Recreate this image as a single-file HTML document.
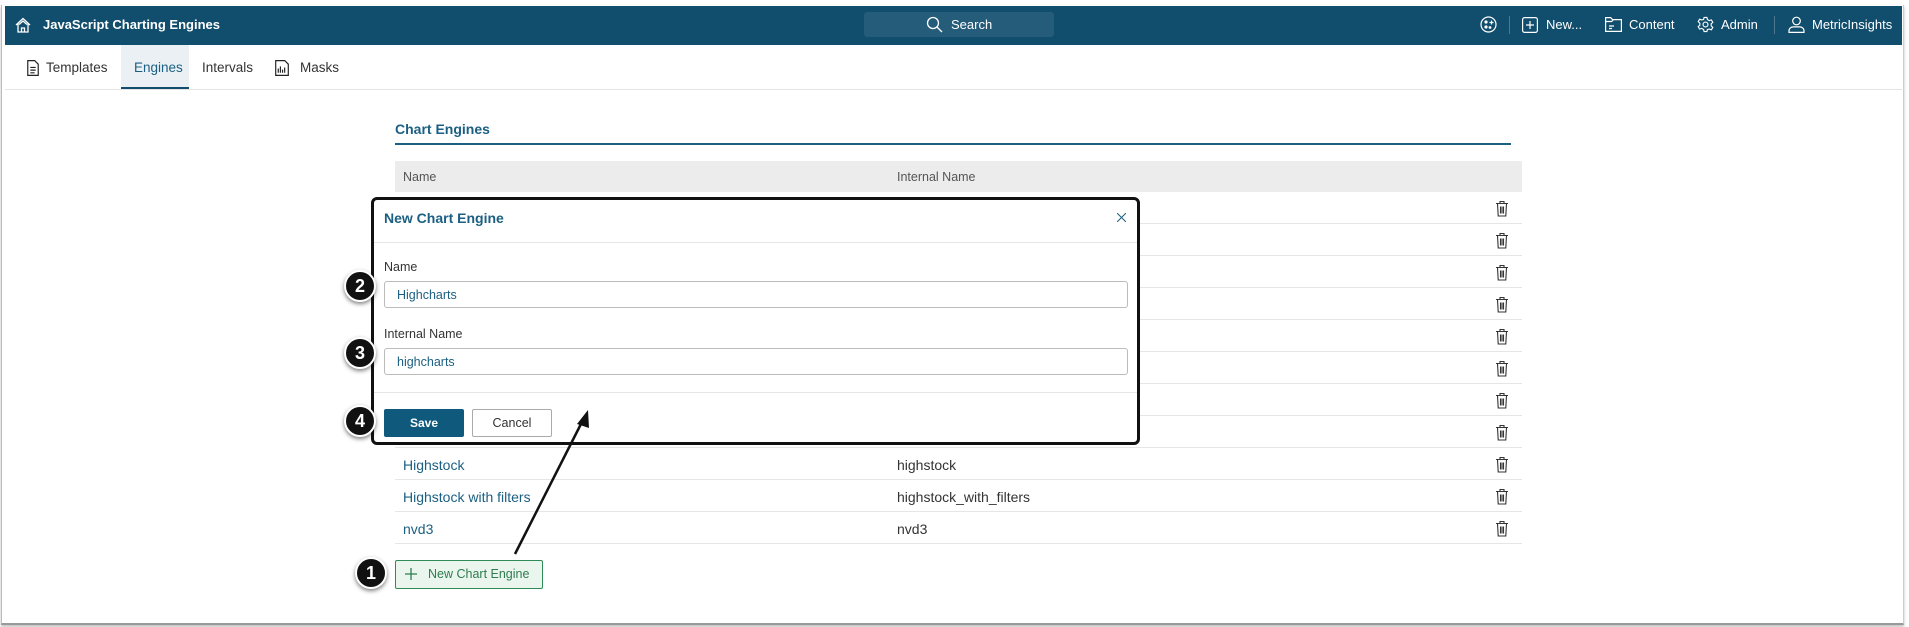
<!DOCTYPE html>
<html><head><meta charset="utf-8"><style>
*{box-sizing:border-box;margin:0;padding:0}
body{width:1909px;height:627px;background:#fff;font-family:"Liberation Sans",sans-serif;position:relative;overflow:hidden;color:#333}
.a{position:absolute}
.frame{left:1px;top:5px;width:1903px;height:620px;border-left:1px solid #bbb;border-right:1px solid #ccc;border-bottom:2px solid #999;box-shadow:0 2px 3px rgba(0,0,0,.25)}
.hdr{left:5px;top:6px;width:1897px;height:39px;background:#114d6c}
.w{color:#fff;font-size:13px}
.tab{font-size:13.5px;color:#333;top:60px}
.row{left:395px;width:1127px;height:32px;border-bottom:1px solid #e6e6e6}
.row span{position:absolute;top:9px;font-size:14px}
.trash{left:1495px}
.badge{width:32px;height:32px;border-radius:50%;background:#111;border:2px solid #fff;box-shadow:0 2px 4px rgba(0,0,0,.5);color:#fff;font-weight:bold;font-size:18px;text-align:center;line-height:28px}
</style></head><body>
<div class="a frame"></div>
<div class="a hdr"></div>
<svg class="a" style="left:15px;top:17px" width="16" height="16" viewBox="0 0 16 16" fill="none" stroke="#fff" stroke-width="1.3"><path d="M1 8L8 1.5 15 8M3 6.5V15h10V6.5M6.5 15v-4h3v4M4 7.5L8 4l4 3.5"/></svg>
<div class="a w" style="left:43px;top:17px;font-weight:bold;font-size:13px">JavaScript Charting Engines</div>
<div class="a" style="left:864px;top:12px;width:190px;height:25px;background:#245c79;border-radius:3px"></div>
<svg class="a" style="left:926px;top:16px" width="17" height="17" viewBox="0 0 17 17" fill="none" stroke="#fff" stroke-width="1.3"><circle cx="7" cy="7" r="5.5"/><path d="M11 11l5 5"/></svg>
<div class="a w" style="left:951px;top:17px">Search</div>
<svg class="a" style="left:1480px;top:16px" width="17" height="17" viewBox="0 0 17 17" fill="none" stroke="#fff" stroke-width="1.2"><circle cx="8.5" cy="8.5" r="7.5"/><path d="M9.5 6.5h4M11.5 4.5v4" /><circle cx="6" cy="6" r="1" fill="#fff"/><circle cx="6" cy="11" r="1" fill="#fff"/><circle cx="10" cy="11.5" r=".8" fill="#fff"/></svg>
<div class="a" style="left:1509px;top:16px;width:1px;height:18px;background:#4f7890"></div>
<svg class="a" style="left:1522px;top:17px" width="16" height="16" viewBox="0 0 16 16" fill="none" stroke="#fff" stroke-width="1.2"><rect x=".6" y=".6" width="14.8" height="14.8" rx="2"/><path d="M8 4v8M4 8h8"/></svg>
<div class="a w" style="left:1546px;top:17px">New...</div>
<svg class="a" style="left:1605px;top:17px" width="17" height="15" viewBox="0 0 17 15" fill="none" stroke="#fff" stroke-width="1.2"><path d="M.6 14.4V.6h5l2 2h8.8v11.8zM.6 4.5h6l2-2M4 9h5M4 11.5h3"/></svg>
<div class="a w" style="left:1629px;top:17px">Content</div>
<svg class="a" style="left:1697px;top:16px" width="17" height="17" viewBox="0 0 24 24" fill="none" stroke="#fff" stroke-width="1.6"><circle cx="12" cy="12" r="3.5"/><path d="M10 2h4l.7 3 2.6 1.5 3-1 2 3.5-2.3 2v3l2.3 2-2 3.5-3-1L14.7 19 14 22h-4l-.7-3-2.6-1.5-3 1-2-3.5 2.3-2v-3L1.7 8l2-3.5 3 1L9.3 5z"/></svg>
<div class="a w" style="left:1721px;top:17px">Admin</div>
<div class="a" style="left:1774px;top:16px;width:1px;height:18px;background:#4f7890"></div>
<svg class="a" style="left:1788px;top:16px" width="17" height="17" viewBox="0 0 17 17" fill="none" stroke="#fff" stroke-width="1.2"><circle cx="8.5" cy="5" r="3.8"/><path d="M1 16.4v-1.5c0-2.5 2-4 4.5-4h6c2.5 0 4.5 1.5 4.5 4v1.5z"/></svg>
<div class="a w" style="left:1812px;top:17px">MetricInsights</div>

<div class="a" style="left:5px;top:89px;width:1897px;height:1px;background:#e4e4e4"></div>
<div class="a" style="left:121px;top:45px;width:68px;height:44px;background:#eaf0f4;border-bottom:2px solid #114d6c"></div>
<svg class="a" style="left:27px;top:60px" width="12" height="16" viewBox="0 0 11 15" fill="none" stroke="#222" stroke-width="1.1"><path d="M.6.6h6.5l3.3 3.3v10.5H.6zM3 7h5M3 9.5h5M3 12h4"/></svg>
<div class="a tab" style="left:46px">Templates</div>
<div class="a tab" style="left:134px;color:#1b5f82">Engines</div>
<div class="a tab" style="left:202px">Intervals</div>
<svg class="a" style="left:275px;top:60px" width="14" height="16" viewBox="0 0 13 15" fill="none" stroke="#222" stroke-width="1.1"><path d="M.6.6h8.5l3.3 3.3v10.5H.6zM3 12V8M5 12V6M7 12V9M9 12V7"/></svg>
<div class="a tab" style="left:300px">Masks</div>

<div class="a" style="left:395px;top:121px;font-size:14px;font-weight:bold;color:#1b5f82">Chart Engines</div>
<div class="a" style="left:395px;top:143px;width:1116px;height:2px;background:#1b5f82"></div>
<div class="a" style="left:395px;top:161px;width:1127px;height:31px;background:#ececec"></div>
<div class="a" style="left:403px;top:170px;font-size:12.5px;color:#555">Name</div>
<div class="a" style="left:897px;top:170px;font-size:12.5px;color:#555">Internal Name</div>

<div class="a row" style="top:192px"></div><div class="a row" style="top:224px"></div><div class="a row" style="top:256px"></div><div class="a row" style="top:288px"></div><div class="a row" style="top:320px"></div><div class="a row" style="top:352px"></div><div class="a row" style="top:384px"></div><div class="a row" style="top:416px"></div>
<div class="a row" style="top:448px"><span style="left:8px;color:#1b5f82">Highstock</span><span style="left:502px">highstock</span></div>
<div class="a row" style="top:480px"><span style="left:8px;color:#1b5f82">Highstock with filters</span><span style="left:502px">highstock_with_filters</span></div>
<div class="a row" style="top:512px"><span style="left:8px;color:#1b5f82">nvd3</span><span style="left:502px">nvd3</span></div>

<svg width="0" height="0" style="position:absolute"><defs><symbol id="t" viewBox="0 0 14 17"><g fill="none" stroke="#333" stroke-width="1.1"><path d="M1 3.5h12M5 3.5V1.5h4v2M2.5 3.5l.7 12.5h7.6l.7-12.5M5.5 6.5v7M7 6.5v7M8.5 6.5v7"/></g></symbol></defs></svg>
<svg class="a trash" style="top:200px" width="14" height="17"><use href="#t"/></svg>
<svg class="a trash" style="top:232px" width="14" height="17"><use href="#t"/></svg>
<svg class="a trash" style="top:264px" width="14" height="17"><use href="#t"/></svg>
<svg class="a trash" style="top:296px" width="14" height="17"><use href="#t"/></svg>
<svg class="a trash" style="top:328px" width="14" height="17"><use href="#t"/></svg>
<svg class="a trash" style="top:360px" width="14" height="17"><use href="#t"/></svg>
<svg class="a trash" style="top:392px" width="14" height="17"><use href="#t"/></svg>
<svg class="a trash" style="top:424px" width="14" height="17"><use href="#t"/></svg>
<svg class="a trash" style="top:456px" width="14" height="17"><use href="#t"/></svg>
<svg class="a trash" style="top:488px" width="14" height="17"><use href="#t"/></svg>
<svg class="a trash" style="top:520px" width="14" height="17"><use href="#t"/></svg>

<div class="a" style="left:395px;top:560px;width:148px;height:29px;background:#eaf5ee;border:1px solid #2e8b57;border-radius:2px"></div>
<svg class="a" style="left:405px;top:568px" width="12" height="12" viewBox="0 0 12 12" stroke="#2e7d4f" stroke-width="1.3"><path d="M6 0v12M0 6h12"/></svg>
<div class="a" style="left:428px;top:567px;font-size:12.5px;color:#2e7d4f">New Chart Engine</div>

<div class="a" style="left:371px;top:197px;width:769px;height:248px;background:#fff;border:3px solid #111;border-radius:6px"></div>
<div class="a" style="left:384px;top:210px;font-size:14px;font-weight:bold;color:#1b5f82">New Chart Engine</div>
<svg class="a" style="left:1117px;top:213px" width="9" height="9" viewBox="0 0 9 9" stroke="#1b5f82" stroke-width="1"><path d="M0 0l9 9M9 0L0 9"/></svg>
<div class="a" style="left:374px;top:242px;width:763px;height:1px;background:#e6e6e6"></div>
<div class="a" style="left:384px;top:260px;font-size:12.5px">Name</div>
<div class="a" style="left:384px;top:281px;width:744px;height:27px;border:1px solid #bbb;border-radius:3px"></div>
<div class="a" style="left:397px;top:288px;font-size:12.5px;color:#1b5f82">Highcharts</div>
<div class="a" style="left:384px;top:327px;font-size:12.5px">Internal Name</div>
<div class="a" style="left:384px;top:348px;width:744px;height:27px;border:1px solid #bbb;border-radius:3px"></div>
<div class="a" style="left:397px;top:355px;font-size:12.5px;color:#1b5f82">highcharts</div>
<div class="a" style="left:374px;top:392px;width:763px;height:1px;background:#e6e6e6"></div>
<div class="a" style="left:384px;top:409px;width:80px;height:28px;background:#0f5a7c;border-radius:2px;color:#fff;font-size:12px;font-weight:bold;text-align:center;line-height:28px">Save</div>
<div class="a" style="left:472px;top:409px;width:80px;height:28px;border:1px solid #aaa;border-radius:2px;font-size:12.5px;text-align:center;line-height:26px">Cancel</div>

<svg class="a" style="left:0;top:0" width="1909" height="627"><path d="M515 554L584 418" stroke="#111" stroke-width="2.5"/><path d="M588 410L577 424 589 428z" fill="#111"/></svg>
<div class="a badge" style="left:344px;top:270px">2</div>
<div class="a badge" style="left:344px;top:337px">3</div>
<div class="a badge" style="left:344px;top:405px">4</div>
<div class="a badge" style="left:355px;top:557px">1</div>
</body></html>
